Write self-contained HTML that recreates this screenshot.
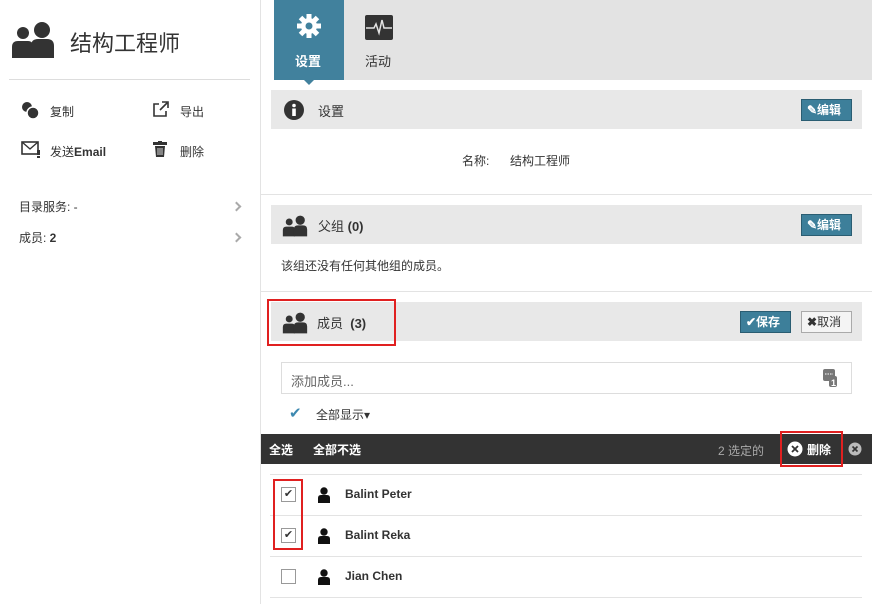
<!DOCTYPE html>
<html><head><meta charset="utf-8"><style>
*{box-sizing:border-box;margin:0;padding:0}
body{width:872px;height:604px;overflow:hidden;background:#fff;font-family:"Liberation Sans","Noto Sans CJK SC",sans-serif;font-size:12px;color:#333;position:relative}
.a{position:absolute}
.hdr{position:absolute;left:271px;width:591px;height:39px;background:#e8e8e8}
.btn{position:absolute;height:22px;background:#3d7f9a;border:1px solid #2a5d72;color:#fff;font-size:12px;font-weight:bold;line-height:20px;padding-left:5px}
.line{position:absolute;height:1px;background:#e3e3e3}
.cb{position:absolute;left:281px;width:15px;height:15px;border:1px solid #999;background:#fff;font-size:11px;line-height:13px;text-align:center;color:#333}
.nm{position:absolute;left:345px;font-weight:bold;font-size:12px;color:#333}
.red{position:absolute;border:2px solid #e02020}
.chev{position:absolute;left:233px;width:7px;height:7px;border-right:2px solid #aaa;border-top:2px solid #aaa;transform:rotate(45deg)}
</style></head><body>
<svg class="a" style="left:11px;top:21px" width="44" height="38" viewBox="0 0 44 38"><circle cx="12" cy="12" r="6" fill="#333"/><path d="M1 37 V26 Q1 20 7 20 H17 Q22 20 22 26 V37Z" fill="#333"/><circle cx="31" cy="9" r="8" fill="#333"/><path d="M20 37 V25 Q20 18 27 18 H36 Q43 18 43 25 V37Z" fill="#333"/></svg>
<div class="a" style="left:70px;top:26px;font-size:22px;color:#333">结构工程师</div>
<div class="a" style="left:9px;top:79px;width:241px;height:1px;background:#ddd"></div>
<svg class="a" style="left:21px;top:101px" width="20" height="18"><circle cx="6" cy="6" r="5" fill="#333"/><circle cx="12" cy="12" r="6" fill="#333" stroke="#fff" stroke-width="1.5"/></svg>
<div class="a" style="left:50px;top:103px">复制</div>
<svg class="a" style="left:152px;top:101px" width="18" height="16"><path d="M7 3H2V15H14V10" fill="none" stroke="#333" stroke-width="1.6"/><path d="M8 9L15 2M10 1H16V7" fill="none" stroke="#333" stroke-width="1.6"/></svg>
<div class="a" style="left:180px;top:103px">导出</div>
<svg class="a" style="left:21px;top:141px" width="20" height="17"><rect x="1" y="1" width="16" height="12" fill="none" stroke="#333" stroke-width="1.6"/><path d="M1 1L9 8L17 1" fill="none" stroke="#333" stroke-width="1.4"/><rect x="16" y="9" width="3" height="5" fill="#333"/><rect x="16" y="15" width="3" height="2" fill="#333"/></svg>
<div class="a" style="left:50px;top:143px">发送<b>Email</b></div>
<svg class="a" style="left:153px;top:141px" width="14" height="16"><rect x="0" y="1" width="14" height="3" fill="#333"/><rect x="5" y="0" width="4" height="2" fill="#333"/><path d="M2 5H12L11 16H3Z" fill="#333"/><path d="M5 7V14M7 7V14M9 7V14" stroke="#fff" stroke-width="0.8"/></svg>
<div class="a" style="left:180px;top:143px">删除</div>
<div class="a" style="left:19px;top:198px">目录服务: -</div>
<div class="chev" style="top:203px"></div>
<div class="a" style="left:19px;top:229px">成员: <b>2</b></div>
<div class="chev" style="top:234px"></div>
<div class="a" style="left:260px;top:0;width:1px;height:604px;background:#e3e3e3"></div>
<div class="a" style="left:274px;top:0;width:598px;height:80px;background:#e3e3e3"></div>
<div class="a" style="left:274px;top:0;width:70px;height:80px;background:#41819d"></div>
<div class="a" style="left:303px;top:79px;width:0;height:0;border-left:6px solid transparent;border-right:6px solid transparent;border-top:6px solid #41819d"></div>
<svg class="a" style="left:296px;top:13px" width="26" height="26" viewBox="-13 -13 26 26"><g fill="#fff"><circle r="8"/><rect x="-2.5" y="-12" width="5" height="24"/><rect x="-2.5" y="-12" width="5" height="24" transform="rotate(45)"/><rect x="-2.5" y="-12" width="5" height="24" transform="rotate(90)"/><rect x="-2.5" y="-12" width="5" height="24" transform="rotate(135)"/></g><circle r="3.5" fill="#41819d"/></svg>
<div class="a" style="left:295px;top:51px;color:#fff;font-size:13px;font-weight:bold">设置</div>
<svg class="a" style="left:365px;top:15px" width="28" height="25"><rect width="28" height="25" rx="2" fill="#333"/><path d="M1 13H9L11 9L14 18L17 5L19 13H27" fill="none" stroke="#e3e3e3" stroke-width="1.5"/></svg>
<div class="a" style="left:365px;top:51px;font-size:13px">活动</div>
<div class="hdr" style="top:90px"></div>
<svg class="a" style="left:284px;top:100px" width="20" height="20"><circle cx="10" cy="10" r="10" fill="#333"/><circle cx="10" cy="5.5" r="1.8" fill="#fff"/><rect x="8.2" y="8.5" width="3.6" height="7.5" fill="#fff"/></svg>
<div class="a" style="left:318px;top:101px;font-size:13px">设置</div>
<div class="btn" style="left:801px;top:99px;width:51px">✎编辑</div>
<div class="a" style="left:462px;top:152px">名称:</div>
<div class="a" style="left:510px;top:152px">结构工程师</div>
<div class="line" style="left:261px;top:194px;width:611px"></div>
<div class="hdr" style="top:205px"></div>
<svg class="a" style="left:282px;top:215px" width="26" height="22" viewBox="0 0 44 38"><circle cx="12" cy="12" r="6" fill="#333"/><path d="M1 37 V26 Q1 20 7 20 H17 Q22 20 22 26 V37Z" fill="#333"/><circle cx="31" cy="9" r="8" fill="#333"/><path d="M20 37 V25 Q20 18 27 18 H36 Q43 18 43 25 V37Z" fill="#333"/></svg>
<div class="a" style="left:318px;top:216px;font-size:13px">父组 <b>(0)</b></div>
<div class="btn" style="left:801px;top:214px;width:51px">✎编辑</div>
<div class="a" style="left:281px;top:257px">该组还没有任何其他组的成员。</div>
<div class="line" style="left:261px;top:291px;width:611px"></div>
<div class="hdr" style="top:302px"></div>
<svg class="a" style="left:282px;top:312px" width="26" height="22" viewBox="0 0 44 38"><circle cx="12" cy="12" r="6" fill="#333"/><path d="M1 37 V26 Q1 20 7 20 H17 Q22 20 22 26 V37Z" fill="#333"/><circle cx="31" cy="9" r="8" fill="#333"/><path d="M20 37 V25 Q20 18 27 18 H36 Q43 18 43 25 V37Z" fill="#333"/></svg>
<div class="a" style="left:317px;top:313px;font-size:13px">成员 &nbsp;<b>(3)</b></div>
<div class="red" style="left:267px;top:299px;width:129px;height:47px"></div>
<div class="btn" style="left:740px;top:311px;width:51px">✔保存</div>
<div class="a" style="left:801px;top:311px;width:51px;height:22px;border:1px solid #aaa;background:#f4f4f4;line-height:20px;padding-left:5px"><b>✖</b>取消</div>
<div class="a" style="left:281px;top:362px;width:571px;height:32px;border:1px solid #ddd"></div>
<div class="a" style="left:291px;top:371px;color:#666;font-size:13px">添加成员...</div>
<svg class="a" style="left:822px;top:369px" width="16" height="19"><rect x="1" y="0" width="12" height="12" rx="2" fill="#777"/><path d="M3 5H11" stroke="#fff" stroke-dasharray="1.5 1"/><rect x="7" y="7" width="8" height="11" rx="2" fill="#777"/><text x="9" y="17" font-size="9" fill="#fff" font-family="Liberation Sans" font-weight="bold">1</text></svg>
<div class="a" style="left:289px;top:404px;color:#3d89b0;font-size:15px">✔</div>
<div class="a" style="left:316px;top:406px">全部显示▾</div>
<div class="a" style="left:261px;top:434px;width:611px;height:30px;background:#333"></div>
<div class="a" style="left:269px;top:441px;color:#fff;font-weight:bold">全选</div>
<div class="a" style="left:313px;top:441px;color:#fff;font-weight:bold">全部不选</div>
<div class="a" style="left:718px;top:442px;color:#aaa">2 选定的</div>
<svg class="a" style="left:787px;top:441px" width="16" height="16"><circle cx="8" cy="8" r="7.5" fill="#fff"/><path d="M5 5L11 11M11 5L5 11" stroke="#333" stroke-width="1.8"/></svg>
<div class="a" style="left:807px;top:441px;color:#fff;font-weight:bold">删除</div>
<div class="red" style="left:780px;top:431px;width:63px;height:36px"></div>
<svg class="a" style="left:848px;top:442px" width="14" height="14"><circle cx="7" cy="7" r="6.5" fill="#bbb"/><path d="M4.5 4.5L9.5 9.5M9.5 4.5L4.5 9.5" stroke="#333" stroke-width="1.6"/></svg>
<div class="line" style="left:270px;top:474px;width:592px"></div>
<div class="line" style="left:270px;top:515px;width:592px"></div>
<div class="line" style="left:270px;top:556px;width:592px"></div>
<div class="line" style="left:270px;top:597px;width:592px"></div>
<div class="cb" style="top:487px">✔</div>
<div class="cb" style="top:528px">✔</div>
<div class="cb" style="top:569px"></div>
<div class="red" style="left:273px;top:479px;width:30px;height:71px"></div>
<svg class="a" style="left:318px;top:487px" width="12" height="16"><circle cx="6" cy="4" r="3.7" fill="#111"/><path d="M0 16V11Q0 8 3 8H9Q12 8 12 11V16Z" fill="#111"/></svg>
<svg class="a" style="left:318px;top:528px" width="12" height="16"><circle cx="6" cy="4" r="3.7" fill="#111"/><path d="M0 16V11Q0 8 3 8H9Q12 8 12 11V16Z" fill="#111"/></svg>
<svg class="a" style="left:318px;top:569px" width="12" height="16"><circle cx="6" cy="4" r="3.7" fill="#111"/><path d="M0 16V11Q0 8 3 8H9Q12 8 12 11V16Z" fill="#111"/></svg>
<div class="nm" style="top:487px">Balint Peter</div>
<div class="nm" style="top:528px">Balint Reka</div>
<div class="nm" style="top:569px">Jian Chen</div>
</body></html>
